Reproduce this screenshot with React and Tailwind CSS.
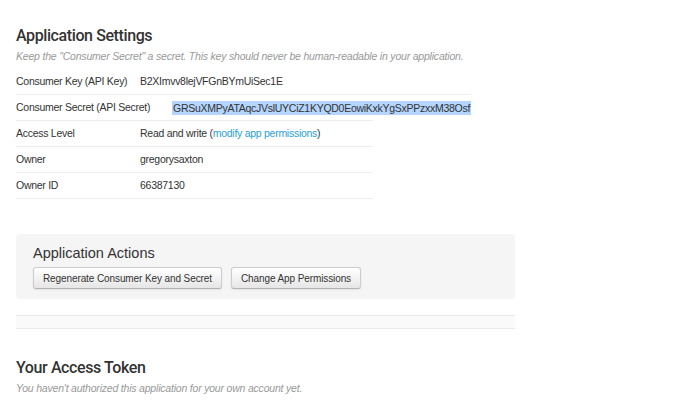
export default function App() {
  const secondRows = [
    { label: "Access Level", value: "access" },
    { label: "Owner", value: "gregorysaxton" },
    { label: "Owner ID", value: "66387130" },
  ];

  return (
    <div className="w-[700px] h-[400px] overflow-hidden bg-white text-[#333] font-['Liberation_Sans',Arial,sans-serif]">
      <div className="pl-4 pt-[25px]">
        {/* Settings heading */}
        <h2 className="text-[16px] leading-[22px] font-medium text-[#333] font-['Roboto',sans-serif] tracking-[-0.4px]">
          Application Settings
        </h2>
        <p className="mt-[2px] text-[10.5px] leading-[14px] italic text-[#999] tracking-[-0.2px]">
          Keep the "Consumer Secret" a secret. This key should never be human-readable in your application.
        </p>

        {/* Key + secret */}
        <div className="mt-[6px] w-fit text-[10.5px] tracking-[-0.27px]">
          <div className="flex h-[25px] items-center">
            <span className="w-[124px]">Consumer Key (API Key)</span>
            <span>B2XImvv8lejVFGnBYmUiSec1E</span>
          </div>
          <div className="flex h-[26px] items-center border-t border-[#eee]">
            <span className="w-[156px]">Consumer Secret (API Secret)</span>
            <span className="bg-[#b4d5fe] px-[1px] leading-[14px]">
              GRSuXMPyATAqcJVslUYCiZ1KYQD0EowiKxkYgSxPPzxxM38Osf
            </span>
          </div>
        </div>

        {/* Other details */}
        <div className="w-[357px] text-[10.5px] tracking-[-0.27px] border-b border-[#eee]">
          {secondRows.map((row) => (
            <div key={row.label} className="flex h-[26px] items-center border-t border-[#eee]">
              <span className="w-[124px]">{row.label}</span>
              {row.value === "access" ? (
                <span>
                  Read and write (
                  <a className="text-[#2a9fd6]">modify app permissions</a>)
                </span>
              ) : (
                <span>{row.value}</span>
              )}
            </div>
          ))}
        </div>

        {/* Actions */}
        <div className="mt-[35px] w-[499px] rounded-[4px] bg-[#f5f5f5] px-[17px] pt-[8px] pb-[10px]">
          <h3 className="text-[14.5px] leading-[22px] text-[#333]">Application Actions</h3>
          <div className="mt-[3px] flex gap-[9px]">
            {["Regenerate Consumer Key and Secret", "Change App Permissions"].map((label) => (
              <button
                key={label}
                className="h-[22px] rounded-[3px] border border-[#ccc] border-b-[#b3b3b3] bg-gradient-to-b from-white to-[#e6e6e6] px-[9px] text-[10px] tracking-[-0.1px] text-[#333] shadow-[0_1px_2px_rgba(0,0,0,0.08)]"
              >
                {label}
              </button>
            ))}
          </div>
        </div>

        <div className="mt-[16px] h-[14px] w-[499px] border-y border-[#eaeaea] bg-[#fafafa]" />

        {/* Access token */}
        <h2 className="mt-[28px] text-[16px] leading-[22px] font-medium text-[#333] font-['Roboto',sans-serif] tracking-[-0.4px]">
          Your Access Token
        </h2>
        <p className="mt-[2px] text-[10.5px] leading-[14px] italic text-[#999] tracking-[-0.2px]">
          You haven't authorized this application for your own account yet.
        </p>
      </div>
    </div>
  );
}
